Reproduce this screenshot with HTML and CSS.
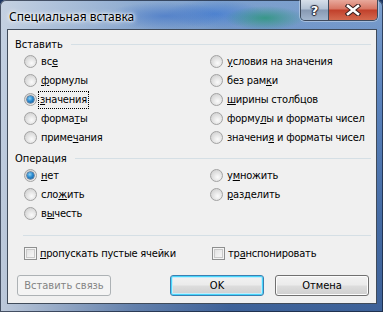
FILE: index.html
```html
<!DOCTYPE html>
<html lang="ru">
<head>
    <meta charset="UTF-8">
    <title>Специальная вставка</title>
    <link rel="stylesheet" href="styles.css">
</head>
<body>

    <div class="window">
        <div class="titlebar">
            <span class="title">Специальная вставка</span>
            <div class="caption-buttons">
                <span class="cap help">?</span>
                <span class="cap close">
                    <svg width="16" height="12" viewBox="0 0 16 12">
                        <path d="M3 2 L13 10 M13 2 L3 10" stroke="#3a2020" stroke-width="4.6" stroke-linecap="square"/>
                        <path d="M3 2 L13 10 M13 2 L3 10" stroke="#fff" stroke-width="2.6" stroke-linecap="square"/>
                    </svg>
                </span>
            </div>
        </div>

        <div class="client">
            <div class="group-title"><span>Вставить</span><i class="line"></i></div>
            <div class="options">
                <label class="opt"><span class="radio"></span><span>вс<u>е</u></span></label>
                <label class="opt"><span class="radio"></span><span><u>у</u>словия на значения</span></label>
                <label class="opt"><span class="radio"></span><span><u>ф</u>ормулы</span></label>
                <label class="opt"><span class="radio"></span><span>без рам<u>к</u>и</span></label>
                <label class="opt"><span class="radio checked"></span><span class="focus"><u>з</u>начения</span></label>
                <label class="opt"><span class="radio"></span><span><u>ш</u>ирины столбцов</span></label>
                <label class="opt"><span class="radio"></span><span>форма<u>т</u>ы</span></label>
                <label class="opt"><span class="radio"></span><span>форму<u>л</u>ы и форматы чисел</span></label>
                <label class="opt"><span class="radio"></span><span>приме<u>ч</u>ания</span></label>
                <label class="opt"><span class="radio"></span><span>значени<u>я</u> и форматы чисел</span></label>
            </div>

            <div class="group-title second"><span>Операция</span><i class="line"></i></div>
            <div class="options">
                <label class="opt"><span class="radio checked"></span><span><u>н</u>ет</span></label>
                <label class="opt"><span class="radio"></span><span>у<u>м</u>ножить</span></label>
                <label class="opt"><span class="radio"></span><span>сло<u>ж</u>ить</span></label>
                <label class="opt"><span class="radio"></span><span><u>р</u>азделить</span></label>
                <label class="opt"><span class="radio"></span><span>в<u>ы</u>честь</span></label>
            </div>

            <div class="separator"></div>

            <div class="options checks">
                <label class="opt"><span class="checkbox"></span><span><u>п</u>ропускать пустые ячейки</span></label>
                <label class="opt"><span class="checkbox"></span><span>тр<u>а</u>нспонировать</span></label>
            </div>

            <div class="button-row">
                <button class="btn" disabled>Вставить связь</button>
                <button class="btn default">OK</button>
                <button class="btn">Отмена</button>
            </div>
        </div>
    </div>

</body>
</html>
```

FILE: styles.css
```css
body {
    margin: 0;
    background: #1d3560;
}
.window {
    width: 383px;
    height: 312px;
    box-sizing: border-box;
    padding: 0 6px 8px 7px;
    background:
        radial-gradient(ellipse 60px 14px at 165px 16px, rgba(70, 120, 200, 0.75), transparent),
        radial-gradient(ellipse 40px 12px at 265px 18px, rgba(40, 150, 120, 0.8), transparent),
        radial-gradient(ellipse 50px 14px at 215px 14px, rgba(60, 120, 210, 0.7), transparent),
        linear-gradient(to right, rgba(205, 215, 228, 0.9) 0, rgba(160, 185, 215, 0.5) 35%, rgba(120, 160, 210, 0.3) 60%, rgba(120, 160, 210, 0.3) 100%),
        linear-gradient(to bottom, #7fa0cc 0, #4f78b5 30%, #2f5590 70%, #24467f 100%);
    border-radius: 6px 6px 0 0;
    box-shadow: inset 0 0 0 1px rgba(20, 30, 50, 0.7);
}
.titlebar {
    height: 29px;
    display: flex;
    align-items: flex-start;
}
.title {
    font-family: "Noto Sans", sans-serif;
    font-size: 12px;
    color: #000;
    margin: 8px 0 0 2px;
    text-shadow: 0 0 6px #fff, 0 0 4px #fff, 0 0 2px #fff;
}
.caption-buttons {
    margin-left: auto;
    margin-right: -1px;
    display: flex;
    height: 20px;
    border: 1px solid #3e4a5c;
    border-top: none;
    border-radius: 0 0 5px 5px;
    overflow: hidden;
    box-shadow: 0 0 0 1px rgba(255, 255, 255, 0.35);
}
.cap {
    display: flex;
    align-items: center;
    justify-content: center;
    height: 20px;
}
.help {
    width: 27px;
    border-right: 1px solid #3e4a5c;
    background: linear-gradient(to bottom, #d7dfe9 0, #b3c2d4 45%, #8799b3 50%, #a3b6ce 100%);
    color: #fff;
    font-family: "DejaVu Sans", sans-serif;
    font-weight: bold;
    font-size: 13px;
    text-shadow: 0 0 1px #223, 1px 0 1px #223, -1px 0 1px #223, 0 1px 1px #223, 0 -1px 1px #223;
}
.close {
    width: 48px;
    background: linear-gradient(to bottom, #e8a99c 0, #d77563 45%, #c1402b 50%, #d46a4f 100%);
}
.client {
    height: 275px;
    box-sizing: border-box;
    background: #f0f0f0;
    border: 1px solid #404b5a;
    padding: 8px 0 0;
    font-family: "DejaVu Sans Condensed", "DejaVu Sans", sans-serif;
    font-size: 11px;
    color: #000;
}
.group-title {
    display: flex;
    align-items: center;
    height: 13px;
    line-height: 13px;
    padding-left: 7px;
    padding-right: 5px;
}
.group-title .line {
    flex: 1;
    height: 1px;
    margin-left: 8px;
    margin-top: -1px;
    background: #d5dfe5;
}
.group-title.second {
    margin-top: 5px;
}
.options {
    display: grid;
    grid-template-columns: 186px 1fr;
    padding-left: 16px;
    margin-top: 1px;
}
.opt {
    display: flex;
    align-items: center;
    height: 19px;
    white-space: nowrap;
    letter-spacing: -0.2px;
}
.radio {
    width: 13px;
    height: 13px;
    box-sizing: border-box;
    border-radius: 50%;
    border: 1px solid #a2a2a2;
    background: radial-gradient(circle at 60% 65%, #fbfbfb 0, #dcdcdc 60%, #c8c8c8 100%);
    margin-right: 4px;
    position: relative;
    flex: none;
}
.radio.checked::after {
    content: "";
    position: absolute;
    left: 2px;
    top: 2px;
    width: 7px;
    height: 7px;
    border-radius: 50%;
    background: radial-gradient(circle at 40% 35%, #8fd3f5 0, #2a8ad0 45%, #0d4f8c 100%);
    box-shadow: 0 0 0 0.5px #1a3d66;
}
.focus {
    outline: 1px dotted #000;
    padding: 1px 1px 2px;
    margin-left: -2px;
    line-height: 13px;
}
.separator {
    height: 1px;
    background: #d5dfe5;
    margin: 12px 5px 0 15px;
}
.checks {
    margin-top: 8px;
    grid-template-columns: 188px 1fr;
}
.checkbox {
    width: 13px;
    height: 13px;
    box-sizing: border-box;
    border: 1px solid #8e8f8f;
    background: linear-gradient(135deg, #dcdcdc 0, #f0f0f0 60%, #fafafa 100%);
    box-shadow: inset 0 0 0 1px #f4f4f4, inset 0 0 0 2px #c9c9c9;
    margin-right: 3px;
    flex: none;
}
.button-row {
    display: flex;
    gap: 11px;
    margin-top: 12px;
    padding: 0 7px 0 9px;
}
.btn {
    width: 94px;
    height: 21px;
    box-sizing: border-box;
    border: 1px solid #707070;
    border-radius: 3px;
    background: linear-gradient(to bottom, #f2f2f2 0, #ebebeb 48%, #dddddd 52%, #cfcfcf 100%);
    box-shadow: inset 0 0 0 1px #fcfcfc;
    font-family: "DejaVu Sans Condensed", "DejaVu Sans", sans-serif;
    font-size: 11px;
    color: #000;
    padding: 0;
}
.btn:disabled {
    border-color: #adb2b5;
    background: #f4f4f4;
    color: #838383;
    box-shadow: none;
}
.btn.default {
    margin-left: auto;
    border-color: #3c7fb1;
    box-shadow: inset 0 0 0 1px #48d6fc, inset 0 0 0 2px #c4ecfb;
}
```
